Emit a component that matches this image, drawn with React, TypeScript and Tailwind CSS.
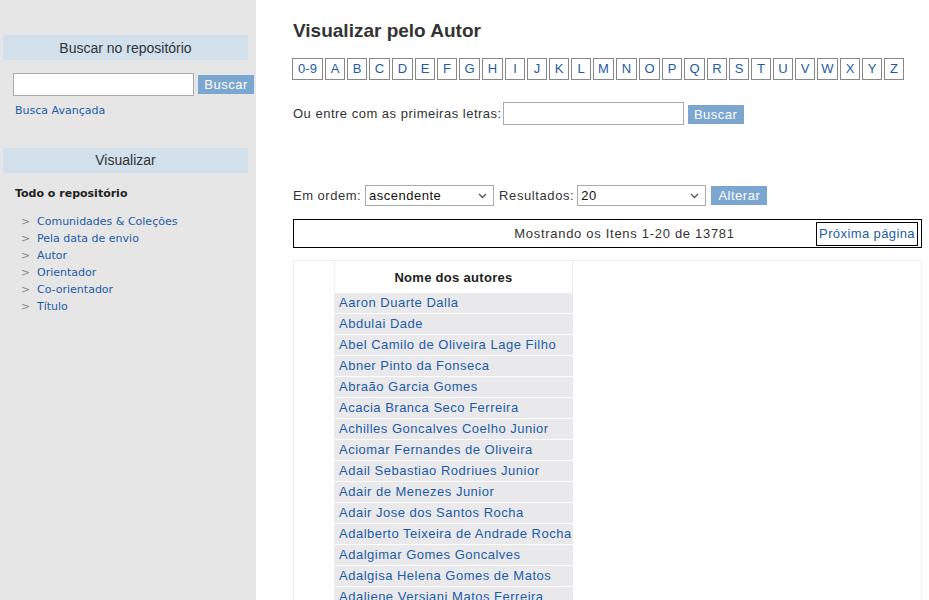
import React from "react";

const letters = ["0-9","A","B","C","D","E","F","G","H","I","J","K","L","M","N","O","P","Q","R","S","T","U","V","W","X","Y","Z"];
const names = [
  "Aaron Duarte Dalla",
  "Abdulai Dade",
  "Abel Camilo de Oliveira Lage Filho",
  "Abner Pinto da Fonseca",
  "Abraão Garcia Gomes",
  "Acacia Branca Seco Ferreira",
  "Achilles Goncalves Coelho Junior",
  "Aciomar Fernandes de Oliveira",
  "Adail Sebastiao Rodriues Junior",
  "Adair de Menezes Junior",
  "Adair Jose dos Santos Rocha",
  "Adalberto Teixeira de Andrade Rocha",
  "Adalgimar Gomes Goncalves",
  "Adalgisa Helena Gomes de Matos",
  "Adaliene Versiani Matos Ferreira",
];
const browse = ["Comunidades & Coleções","Pela data de envio","Autor","Orientador","Co-orientador","Título"];

const tahoma = "font-['Liberation_Sans',Arial,sans-serif]";
const verdana = "font-['DejaVu_Sans',Verdana,sans-serif]";

function letterWidth(l: string) {
  if (l === "0-9") return "w-[31px]";
  if (["M", "W", "C", "D", "G", "H", "N", "O", "Q"].includes(l)) return "w-[21px]";
  return "w-[20px]";
}

export default function App() {
  return (
    <div className={`flex h-[600px] w-[929px] overflow-hidden bg-white text-[#333] ${tahoma}`}>
      {/* Sidebar */}
      <aside className="w-[256px] shrink-0 bg-[#e6e6e6] pt-[35px]">
        <div className="ml-[3px] mr-[8px] flex h-[25px] items-center justify-center bg-[#d1e0ea] pt-[1px] text-[14px] text-[#333]">
          Buscar no repositório
        </div>
        <div className="mt-[13px] flex items-center pl-[13px]">
          <input className="h-[23px] w-[181px] border border-[#aaa] bg-white" />
          <button className="ml-[4px] h-[19px] w-[56px] bg-[#7ba6d0] text-[13px] leading-[19px] tracking-[0.5px] text-white">Buscar</button>
        </div>
        <div className={`mt-[7px] pl-[15px] text-[11px] text-[#1c5ca6] ${verdana}`}>Busca Avançada</div>
        <div className="ml-[3px] mr-[8px] mt-[28px] flex h-[25px] items-center justify-center bg-[#d1e0ea] pt-[1px] text-[14px] text-[#333]">
          Visualizar
        </div>
        <div className={`mt-[13px] pl-[15px] text-[11px] font-bold text-[#222] ${verdana}`}>Todo o repositório</div>
        <ul className={`mt-[12px] text-[11px] ${verdana}`}>
          {browse.map((b) => (
            <li key={b} className="flex h-[17px] items-center">
              <span className="w-[37px] pl-[21px] text-[#888]">&gt;</span>
              <span className="text-[#1c5ca6]">{b}</span>
            </li>
          ))}
        </ul>
      </aside>

      {/* Main */}
      <main className="flex-1 pl-[37px] pt-[19px] text-[13px] tracking-[0.5px]">
        <h1 className="text-[19px] font-bold leading-[24px] tracking-normal text-[#333]">Visualizar pelo Autor</h1>
        <div className="-ml-[1px] mt-[15px] flex gap-[2px]">
          {letters.map((l) => (
            <span
              key={l}
              className={`flex h-[22px] ${letterWidth(l)} items-center justify-center border border-[#888] text-[13px] tracking-normal text-[#1c5ca6]`}
            >
              {l}
            </span>
          ))}
        </div>
        <div className="mt-[22px] flex items-center">
          <span>Ou entre com as primeiras letras:</span>
          <input className="ml-[1px] h-[23px] w-[181px] border border-[#aaa]" />
          <button className="ml-[4px] mt-[2px] h-[19px] w-[56px] bg-[#7ba6d0] text-[13px] leading-[19px] text-white">Buscar</button>
        </div>

        <div className="mt-[60px] flex items-center">
          <span>Em ordem:</span>
          <div className="ml-[4px] flex h-[21px] w-[129px] items-center justify-between border border-[#aaa] pl-[3px] pr-[6px]">
            <span className="text-[#111]">ascendente</span>
            <svg width="9" height="6" viewBox="0 0 9 6"><path d="M1 1l3.5 3.5L8 1" fill="none" stroke="#555" strokeWidth="1.3" /></svg>
          </div>
          <span className="ml-[5px] tracking-[0.6px]">Resultados:</span>
          <div className="ml-[3px] flex h-[21px] w-[129px] items-center justify-between border border-[#aaa] pl-[3px] pr-[6px]">
            <span className="text-[#111]">20</span>
            <svg width="9" height="6" viewBox="0 0 9 6"><path d="M1 1l3.5 3.5L8 1" fill="none" stroke="#555" strokeWidth="1.3" /></svg>
          </div>
          <button className="ml-[5px] h-[19px] w-[56px] bg-[#7ba6d0] text-[13px] leading-[19px] text-white">Alterar</button>
        </div>

        <div className="mr-[7px] mt-[13px] flex h-[29px] items-center border border-black">
          <div className="flex-1 pl-[139px] text-center tracking-[0.7px] text-[#333]">Mostrando os Itens 1-20 de 13781</div>
          <a className="mr-[3px] flex h-[24px] items-center border border-black px-[2px] pt-[1px] tracking-[0.4px] text-[#1c5ca6]">Próxima página</a>
        </div>

        <div className="mr-[7px] mt-[12px] border border-[#eee]">
          <table className="border-separate border-spacing-0">
            <tbody>
              <tr>
                <td rowSpan={names.length + 6} className="w-[41px] border-r border-[#eee]"></td>
                <th className="h-[32px] w-[238px] border-r border-[#eee] pt-[2px] text-center text-[13px] font-bold tracking-[0.3px] text-[#222]">
                  Nome dos autores
                </th>
              </tr>
              {names.map((n) => (
                <tr key={n}>
                  <td className="h-[21px] whitespace-nowrap border-b border-white bg-[#e9e9eb] pl-[4px] text-[#1c5ca6]">{n}</td>
                </tr>
              ))}
            </tbody>
          </table>
        </div>
      </main>
    </div>
  );
}
